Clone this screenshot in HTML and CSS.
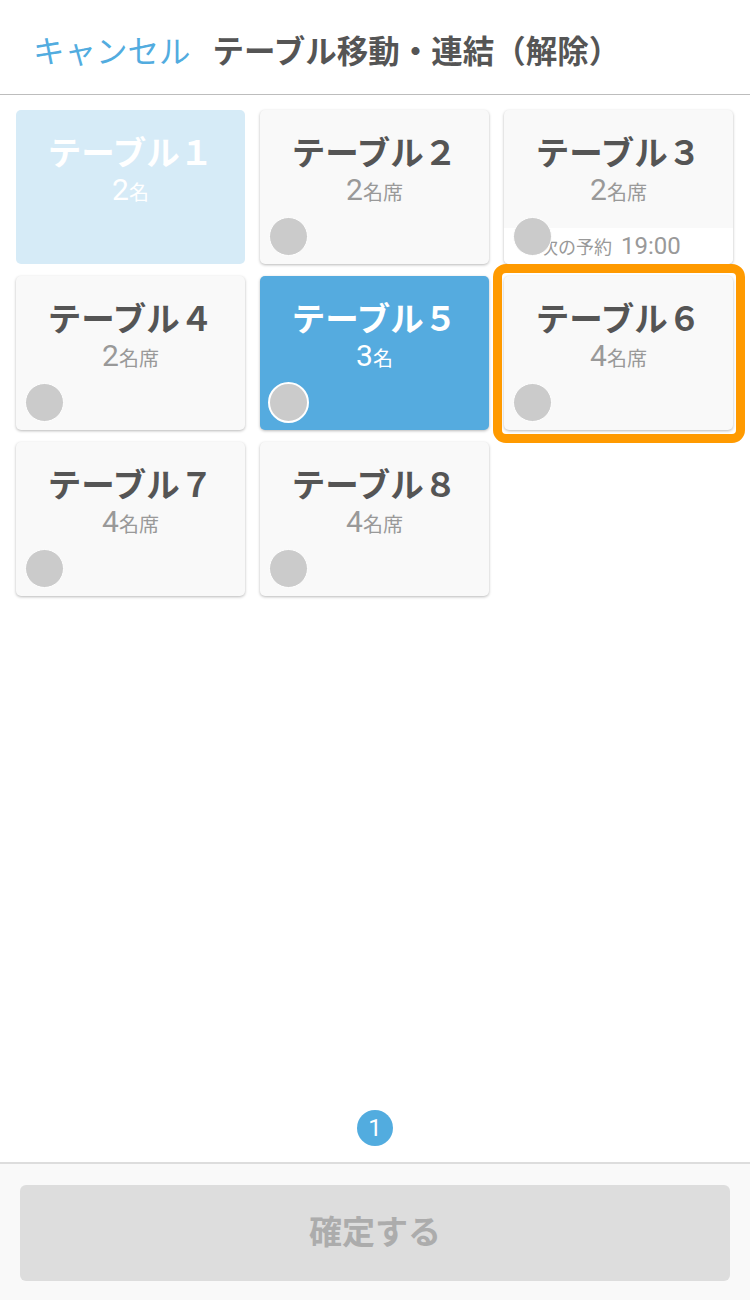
FILE: index.html
```html
<!DOCTYPE html>
<html lang="ja">
<head>
<meta charset="utf-8">
<link rel="stylesheet" href="styles.css">
</head>
<body>
<div class="screen">
  <header class="header">
    <span class="cancel">キャンセル</span>
    <span class="title">テーブル移動・連結（解除）</span>
  </header>
  <main class="main">
    <div class="grid">
      <div class="card card-light">
        <div class="name">テーブル１</div>
        <div class="seats"><span class="num">2</span><span class="unit">名</span></div>
      </div>
      <div class="card">
        <div class="name">テーブル２</div>
        <div class="seats"><span class="num">2</span><span class="unit">名席</span></div>
        <span class="dot"></span>
      </div>
      <div class="card">
        <div class="name">テーブル３</div>
        <div class="seats"><span class="num">2</span><span class="unit">名席</span></div>
        <div class="next"><span class="next-label">次の予約</span><span class="next-time">19:00</span></div>
        <span class="dot"></span>
      </div>
      <div class="card">
        <div class="name">テーブル４</div>
        <div class="seats"><span class="num">2</span><span class="unit">名席</span></div>
        <span class="dot"></span>
      </div>
      <div class="card card-blue">
        <div class="name">テーブル５</div>
        <div class="seats"><span class="num">3</span><span class="unit">名</span></div>
        <span class="dot dot-thick"></span>
      </div>
      <div class="card card-selected">
        <div class="name">テーブル６</div>
        <div class="seats"><span class="num">4</span><span class="unit">名席</span></div>
        <span class="dot"></span>
      </div>
      <div class="card">
        <div class="name">テーブル７</div>
        <div class="seats"><span class="num">4</span><span class="unit">名席</span></div>
        <span class="dot"></span>
      </div>
      <div class="card">
        <div class="name">テーブル８</div>
        <div class="seats"><span class="num">4</span><span class="unit">名席</span></div>
        <span class="dot"></span>
      </div>
    </div>
    <div class="pager"><span class="page">1</span></div>
  </main>
  <footer class="footer">
    <div class="confirm">確定する</div>
  </footer>
</div>
</body>
</html>
```

FILE: styles.css
```css
* { box-sizing: border-box; }
html, body { margin: 0; padding: 0; background: #fff; }
body {
  font-family: "Noto Sans CJK JP", "Noto Sans", sans-serif;
  color: #555;
}
.screen {
  width: 750px;
  height: 1300px;
  display: flex;
  flex-direction: column;
}
.header {
  height: 95px;
  border-bottom: 1px solid #bdbdbd;
  display: flex;
  align-items: center;
  padding: 4px 0 0 33px;
  gap: 22px;
  font-size: 31.5px;
}
.cancel { color: #52acdf; font-weight: 400; }
.title { color: #555; font-weight: 700; }
.main {
  flex: 1;
  display: flex;
  flex-direction: column;
}
.grid {
  display: grid;
  grid-template-columns: repeat(3, 229px);
  grid-auto-rows: 154px;
  column-gap: 15px;
  row-gap: 12px;
  padding: 15px 16px 0 16px;
  flex: 1;
  align-content: start;
}
.card {
  position: relative;
  background: #f9f9f9;
  border-radius: 5px;
  box-shadow: 0 1px 3px rgba(0,0,0,0.28);
  display: flex;
  flex-direction: column;
  align-items: center;
}
.name {
  margin-top: 21px;
  font-size: 33.5px;
  font-weight: 700;
  line-height: 40px;
  color: #555;
}
.seats {
  margin-top: 3px;
  line-height: 32px;
  color: #999;
}
.num { font-size: 30px; font-family: "Roboto", "Noto Sans", sans-serif; font-weight: 400; }
.unit { font-size: 20px; }
.card-light { background: #d6ebf7; box-shadow: none; }
.card-light .name, .card-light .seats { color: #fff; }
.card-blue { background: #55abdf; }
.card-blue .name, .card-blue .seats { color: #fff; }
.card-selected::after {
  content: "";
  position: absolute;
  inset: -12px -12px -13px -11px;
  border: 9px solid #ff9a00;
  border-radius: 13px;
}
.dot {
  position: absolute;
  left: 9px;
  bottom: 8px;
  width: 39px;
  height: 39px;
  border-radius: 50%;
  background: #cbcbcb;
  border: 1px solid #fff;
}
.dot-thick {
  left: 8px;
  bottom: 7px;
  width: 41px;
  height: 41px;
  border: 2px solid #fff;
}
.next {
  position: absolute;
  left: 0;
  right: 0;
  bottom: 0;
  height: 36px;
  background: #fff;
  border-radius: 0 0 5px 5px;
  display: flex;
  align-items: center;
  padding-left: 36px;
  color: #999;
  gap: 9px;
}
.next-label { font-size: 18px; }
.next-time { font-size: 24px; font-family: "Roboto", "Noto Sans", sans-serif; }
.pager {
  display: flex;
  justify-content: center;
  padding-bottom: 16px;
}
.page {
  width: 36px;
  height: 36px;
  border-radius: 50%;
  background: #52acdf;
  color: #fff;
  font-size: 24px;
  line-height: 36px;
  text-align: center;
  font-family: "Roboto", sans-serif;
}
.footer {
  border-top: 2px solid #dddddd;
  background: #f9f9f9;
  padding: 21px 20px 19px 20px;
}
.confirm {
  height: 96px;
  border-radius: 6px;
  background: #dddddd;
  color: #acacac;
  font-size: 33px;
  font-weight: 700;
  display: flex;
  align-items: center;
  justify-content: center;
  padding-bottom: 6px;
}
```
